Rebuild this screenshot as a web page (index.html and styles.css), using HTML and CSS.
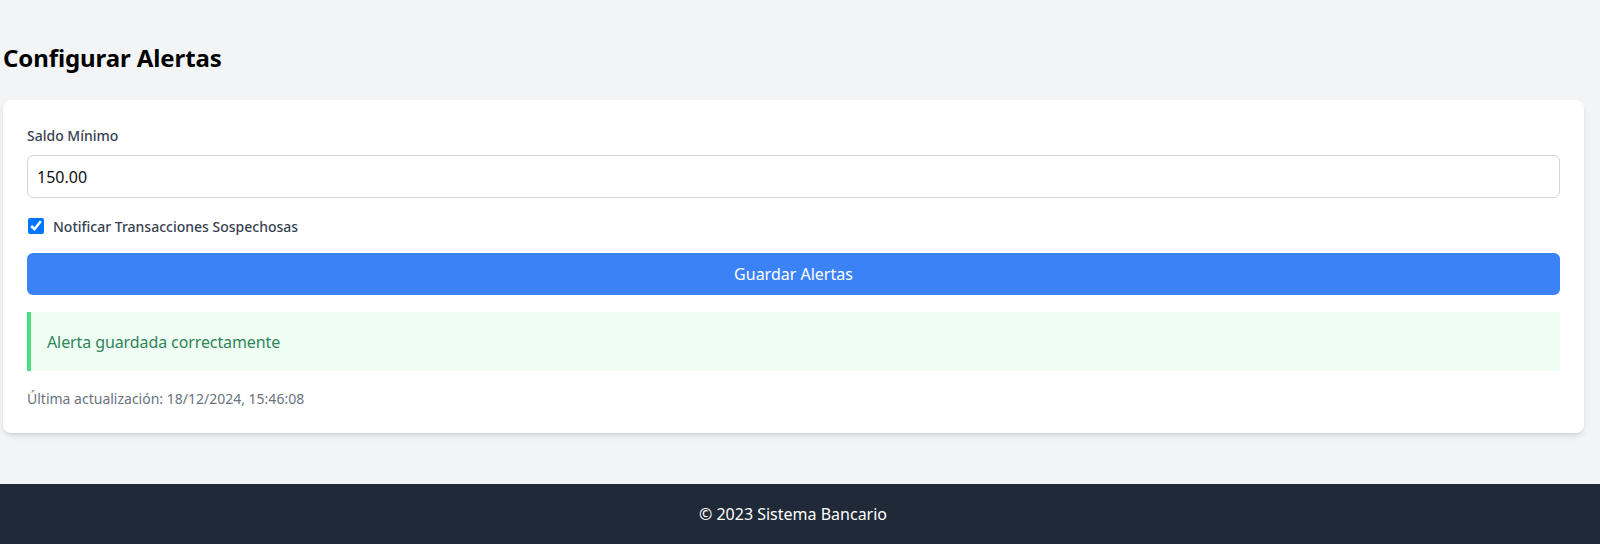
FILE: index.html
```html
<!DOCTYPE html>
<html lang="es">
<head>
<meta charset="utf-8">
<title>Configurar Alertas</title>
<link rel="stylesheet" href="styles.css">
</head>
<body>
<main class="page">
  <h1 class="title">Configurar Alertas</h1>
  <section class="card">
    <label class="field-label" for="saldo">Saldo Mínimo</label>
    <input class="field-input" id="saldo" type="text" value="150.00">
    <label class="check-row">
      <input class="check" type="checkbox" checked>
      <span>Notificar Transacciones Sospechosas</span>
    </label>
    <button class="btn" type="button">Guardar Alertas</button>
    <div class="alert">Alerta guardada correctamente</div>
    <p class="updated">Última actualización: 18/12/2024, 15:46:08</p>
  </section>
</main>
<footer class="footer">© 2023 Sistema Bancario</footer>
</body>
</html>
```
FILE: styles.css
```css
* { box-sizing: border-box; }
html, body { margin: 0; padding: 0; }
body {
  background: #f3f4f6;
  font-family: "Noto Sans", "Open Sans", sans-serif;
  color: #111827;
}
.page {
  margin: 0 16px 0 3px;
  padding: 42px 0 51px;
}
.title {
  margin: 0 0 26px;
  font-size: 24px;
  line-height: 32px;
  font-weight: 700;
  letter-spacing: -0.1px;
  color: #000;
}
.card {
  background: #fff;
  border-radius: 8px;
  box-shadow: 0 4px 6px -1px rgba(0,0,0,0.1), 0 2px 4px -2px rgba(0,0,0,0.1);
  padding: 24px;
  display: flex;
  flex-direction: column;
}
.field-label {
  font-size: 14px;
  line-height: 24px;
  font-weight: 500;
  color: #374151;
  margin-bottom: 7px;
}
.field-input {
  height: 43px;
  border: 1px solid #d1d5db;
  border-radius: 6px;
  padding: 0 9px;
  font-family: inherit;
  font-size: 16px;
  color: #111;
  background: #fff;
  margin: 0 0 16px;
}
.check-row {
  display: flex;
  align-items: center;
  gap: 9px;
  height: 24px;
  font-size: 14px;
  font-weight: 500;
  color: #374151;
  margin-bottom: 15px;
}
.check {
  width: 16px;
  height: 16px;
  margin: 0 0 0 1px;
}
.btn {
  height: 42px;
  border: 0;
  border-radius: 6px;
  background: #3b82f6;
  color: #fff;
  font-family: inherit;
  font-size: 16px;
  margin-bottom: 17px;
}
.alert {
  height: 59px;
  display: flex;
  align-items: center;
  padding: 0 16px;
  background: #f0fdf4;
  border-left: 4px solid #4ade80;
  color: #2f855a;
  font-size: 16px;
  letter-spacing: -0.1px;
}
.updated {
  margin: 18px 0 0;
  font-size: 14px;
  line-height: 20px;
  color: #6b7280;
}
.footer {
  background: #1f2937;
  color: #fff;
  height: 60px;
  display: flex;
  align-items: center;
  justify-content: center;
  padding-right: 14px;
  font-size: 16px;
}
```
